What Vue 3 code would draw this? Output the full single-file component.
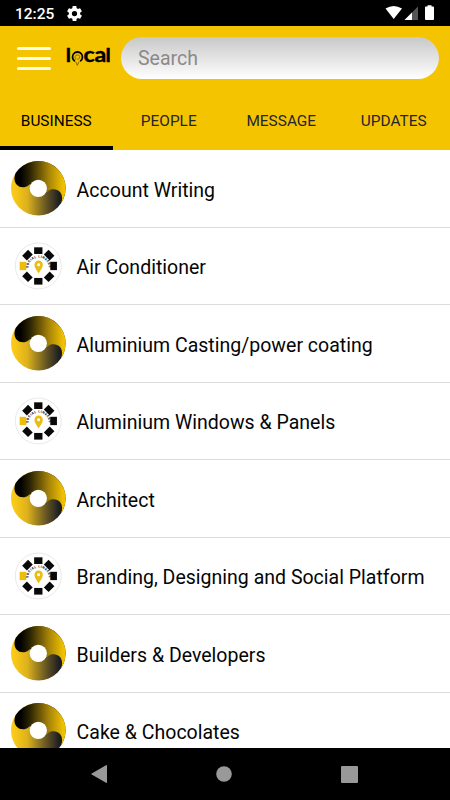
<script setup>
const items = [
  { name: 'Account Writing', icon: 'swirl' },
  { name: 'Air Conditioner', icon: 'badge' },
  { name: 'Aluminium Casting/power coating', icon: 'swirl' },
  { name: 'Aluminium Windows & Panels', icon: 'badge' },
  { name: 'Architect', icon: 'swirl' },
  { name: 'Branding, Designing and Social Platform', icon: 'badge' },
  { name: 'Builders & Developers', icon: 'swirl' },
  { name: 'Cake & Chocolates', icon: 'swirl' },
]
const tabs = ['BUSINESS', 'PEOPLE', 'MESSAGE', 'UPDATES']
const tiles = [0, 45, 90, 135, 180, 225, 270, 315]
</script>

<template>
  <div class="screen">
    <svg width="0" height="0" class="defs" aria-hidden="true">
      <defs>
        <linearGradient id="swirlTop" gradientUnits="userSpaceOnUse" x1="10" y1="0" x2="164" y2="0">
          <stop offset="0.12" stop-color="#000" />
          <stop offset="0.3" stop-color="#2b2304" />
          <stop offset="0.68" stop-color="#a88508" />
          <stop offset="0.95" stop-color="#efc000" />
        </linearGradient>
        <linearGradient id="swirlBottom" gradientUnits="userSpaceOnUse" x1="0" y1="0" x2="164" y2="0">
          <stop offset="0.05" stop-color="#fbca17" />
          <stop offset="0.3" stop-color="#dcb11c" />
          <stop offset="0.62" stop-color="#6e5c23" />
          <stop offset="0.88" stop-color="#1e1e22" />
        </linearGradient>
        <path id="badgeArc" d="M-30 6 A31 31 0 1 1 32 6" />
      </defs>
    </svg>

    <div class="status">
      <span class="time">12:25</span>
      <svg class="gear" width="15" height="15" viewBox="2 2 20 20">
        <path fill="#fff" d="M19.43 12.98c.04-.32.07-.64.07-.98s-.03-.66-.07-.98l2.11-1.65c.19-.15.24-.42.12-.64l-2-3.46c-.12-.22-.39-.3-.61-.22l-2.49 1c-.52-.4-1.08-.73-1.69-.98l-.38-2.65C14.46 2.18 14.25 2 14 2h-4c-.25 0-.46.18-.49.42l-.38 2.65c-.61.25-1.17.59-1.69.98l-2.49-1c-.23-.09-.49 0-.61.22l-2 3.46c-.13.22-.07.49.12.64l2.11 1.65c-.04.32-.07.65-.07.98s.03.66.07.98l-2.11 1.65c-.19.15-.24.42-.12.64l2 3.46c.12.22.39.3.61.22l2.49-1c.52.4 1.08.73 1.69.98l.38 2.65c.03.24.24.42.49.42h4c.25 0 .46-.18.49-.42l.38-2.65c.61-.25 1.17-.59 1.69-.98l2.49 1c.23.09.49 0 .61-.22l2-3.46c.12-.22.07-.49-.12-.64l-2.11-1.65zM12 15.5a3.5 3.5 0 1 1 0-7 3.5 3.5 0 0 1 0 7z" />
      </svg>
      <svg class="signals" width="52" height="16" viewBox="0 0 52 16">
        <path fill="#fff" d="M0.5 3.6Q8.7 -1.8 17 3.6L8.7 14z" />
        <path fill="#555" d="M33 1.5V15H19.5z" />
        <path fill="#fff" d="M27 7.5V15H19.5z" />
        <path fill="#fff" d="M42.5 0.3h4v1.2h1.6q.9 0 .9.9V14q0 .9-.9.9h-7.2q-.9 0-.9-.9V2.4q0-.9.9-.9h1.6z" />
      </svg>
    </div>

    <header class="header">
      <div class="bar">
        <div class="menu"><i></i><i></i><i></i></div>
        <svg class="logo" width="48" height="34" viewBox="0 0 48 34">
          <g class="logo-text">
            <text x="0" y="21.4">l</text>
            <text class="round" x="17.4" y="21.4" textLength="23" lengthAdjust="spacingAndGlyphs">ca</text>
            <text x="39.8" y="21.4">l</text>
          </g>
          <path d="M8.8 20.2A5 5 0 1 1 14.2 20.2" fill="none" stroke="#000" stroke-width="1.8" />
          <path d="M9.6 18.6Q8 14 11.4 14T13.4 17T11 17.4M9.6 20.4L11.3 24.4L13.2 20.4" fill="none" stroke="#3c3100" stroke-width="0.6" />
        </svg>
        <div class="search">Search</div>
      </div>
      <nav class="tabs">
        <div v-for="(tab, i) in tabs" :key="tab" class="tab" :class="{ active: i === 0 }">{{ tab }}</div>
      </nav>
    </header>

    <main class="list">
      <div v-for="item in items" :key="item.name" class="row">
        <svg v-if="item.icon === 'swirl'" class="icon" viewBox="0 0 164 164">
          <circle cx="82" cy="82" r="82" fill="url(#swirlBottom)" />
          <path fill="url(#swirlTop)" d="M14 36A82 82 0 0 1 150 128C160 104 148 85 128 85C114 85 112 92 107 94L57 70C52 72 50 79 36 79C16 79 4 60 14 36z" />
          <circle cx="82" cy="82" r="26" fill="#fff" />
        </svg>
        <svg v-else class="icon" viewBox="-82 -84 164 164">
          <circle r="69" fill="#fff" stroke="#dedede" stroke-width="2" />
          <rect
            v-for="angle in tiles"
            :key="angle"
            x="-12.5"
            y="-56"
            width="25"
            height="20"
            :transform="`rotate(${angle})`"
            :fill="angle === 270 ? '#edbd0c' : '#090909'"
          />
          <text class="badge-text"><textPath href="#badgeArc" textLength="96">SOCIAL LINKERS</textPath></text>
          <path fill="#eabd12" fill-rule="evenodd" d="M1 23C-3 13 -11.5 7 -11.5 -4A12.5 12.5 0 0 1 13.5 -4C13.5 7 5 13 1 23zM1 -8.5a4.5 4.5 0 1 0 0 9a4.5 4.5 0 0 0 0 -9z" />
        </svg>
        <span class="label">{{ item.name }}</span>
      </div>
    </main>

    <footer class="navbar">
      <svg width="16" height="18" viewBox="0 0 16 18"><path fill="#999" d="M15 0.2Q16 -.2 16 .8V17.2Q16 18.2 15 17.8L.7 9.6Q0 9 .7 8.4z" /></svg>
      <svg width="16" height="16" viewBox="0 0 16 16"><circle cx="8" cy="8" r="7.8" fill="#999" /></svg>
      <svg width="17" height="17" viewBox="0 0 17 17"><rect width="17" height="17" rx="1" fill="#999" /></svg>
    </footer>
  </div>
</template>

<style>
body {
  margin: 0;
  overflow: hidden;
}
</style>

<style scoped>
.screen {
  display: flex;
  flex-direction: column;
  width: 450px;
  height: 800px;
  overflow: hidden;
  background: #fff;
  font-family: Roboto, sans-serif;
}
.defs {
  position: absolute;
}
.status {
  display: flex;
  align-items: center;
  box-sizing: border-box;
  flex: none;
  height: 26px;
  padding: 0 13px 0 15px;
  background: #000;
}
.time {
  width: 52px;
  padding-top: 2px;
  color: #fff;
  font-size: 15.5px;
  font-weight: 500;
}
.signals {
  margin-left: auto;
}
.header {
  flex: none;
  height: 124px;
  background: #f5c400;
}
.bar {
  display: flex;
  align-items: center;
  height: 64px;
  padding-left: 17px;
}
.menu {
  display: grid;
  gap: 7px;
  width: 34px;
  flex: none;
}
.menu i {
  height: 3px;
  border-radius: 2px;
  background: #fffbea;
}
.logo {
  flex: none;
  overflow: visible;
  margin: 0 7px 0 15px;
}
.logo-text {
  font-family: Lato, sans-serif;
  font-size: 19px;
  font-weight: 700;
  stroke: #000;
  stroke-width: 0.7px;
}
.round {
  font-size: 21.5px;
  stroke-width: 0.4px;
}
.search {
  box-sizing: border-box;
  flex: none;
  width: 318px;
  height: 42px;
  padding-left: 17px;
  border-radius: 21px;
  background: linear-gradient(#c8c8c8, #fff);
  color: #8a8a8a;
  font-size: 19.5px;
  line-height: 44px;
}
.tabs {
  display: grid;
  grid-template-columns: repeat(4, 1fr);
  height: 60px;
}
.tab {
  box-sizing: border-box;
  height: 60px;
  border-bottom: 4px solid transparent;
  color: #1f2433;
  font-size: 15.4px;
  line-height: 62px;
  text-align: center;
}
.tab.active {
  border-color: #000;
  color: #000;
}
.list {
  flex: 1;
  min-height: 0;
  overflow: hidden;
}
.row {
  display: flex;
  align-items: center;
  box-sizing: border-box;
  height: 77.5px;
  padding-left: 11px;
  border-bottom: 1px solid #dcdcdc;
}
.icon {
  flex: none;
  width: 54.6px;
  height: 54.6px;
}
.badge-text {
  font-size: 10px;
  font-weight: 700;
}
.label {
  margin-left: 11px;
  padding-top: 3.5px;
  color: #050505;
  font-size: 19.5px;
  letter-spacing: 0.01px;
  white-space: nowrap;
}
.navbar {
  display: flex;
  align-items: center;
  justify-content: space-between;
  box-sizing: border-box;
  flex: none;
  height: 52px;
  padding: 0 92px 0 91px;
  background: #000;
}
</style>
